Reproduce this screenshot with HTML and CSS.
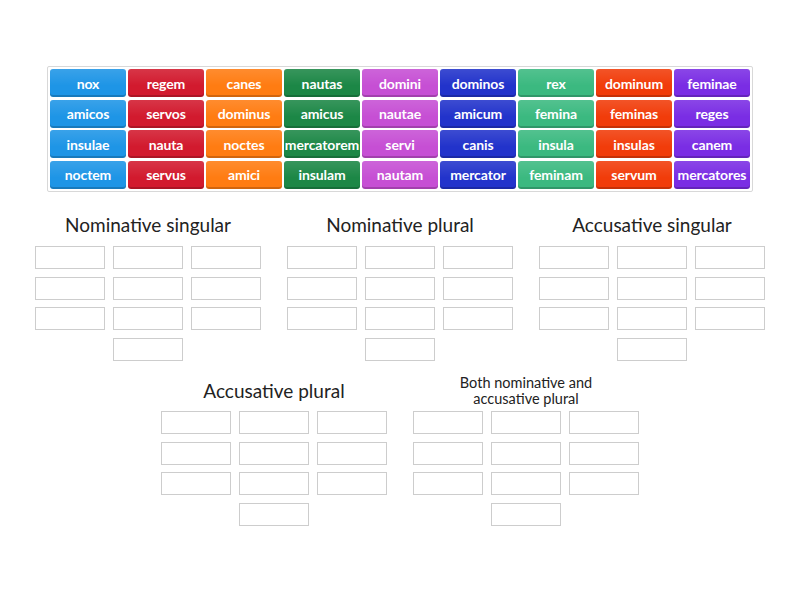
FILE: index.html
```html
<!DOCTYPE html>
<html>
<head>
<meta charset="utf-8">
<link rel="stylesheet" href="styles.css">
</head>
<body>
<div class="tiles">
  <div class="tile c1">nox</div><div class="tile c2">regem</div><div class="tile c3">canes</div><div class="tile c4">nautas</div><div class="tile c5">domini</div><div class="tile c6">dominos</div><div class="tile c7">rex</div><div class="tile c8">dominum</div><div class="tile c9">feminae</div>
  <div class="tile c1">amicos</div><div class="tile c2">servos</div><div class="tile c3">dominus</div><div class="tile c4">amicus</div><div class="tile c5">nautae</div><div class="tile c6">amicum</div><div class="tile c7">femina</div><div class="tile c8">feminas</div><div class="tile c9">reges</div>
  <div class="tile c1">insulae</div><div class="tile c2">nauta</div><div class="tile c3">noctes</div><div class="tile c4">mercatorem</div><div class="tile c5">servi</div><div class="tile c6">canis</div><div class="tile c7">insula</div><div class="tile c8">insulas</div><div class="tile c9">canem</div>
  <div class="tile c1">noctem</div><div class="tile c2">servus</div><div class="tile c3">amici</div><div class="tile c4">insulam</div><div class="tile c5">nautam</div><div class="tile c6">mercator</div><div class="tile c7">feminam</div><div class="tile c8">servum</div><div class="tile c9">mercatores</div>
</div>
<div class="groups">
  <div class="group">
    <div class="title">Nominative singular</div>
    <div class="slots"><div class="slot"></div><div class="slot"></div><div class="slot"></div><div class="slot"></div><div class="slot"></div><div class="slot"></div><div class="slot"></div><div class="slot"></div><div class="slot"></div><div class="slot last"></div></div>
  </div>
  <div class="group">
    <div class="title">Nominative plural</div>
    <div class="slots"><div class="slot"></div><div class="slot"></div><div class="slot"></div><div class="slot"></div><div class="slot"></div><div class="slot"></div><div class="slot"></div><div class="slot"></div><div class="slot"></div><div class="slot last"></div></div>
  </div>
  <div class="group">
    <div class="title">Accusative singular</div>
    <div class="slots"><div class="slot"></div><div class="slot"></div><div class="slot"></div><div class="slot"></div><div class="slot"></div><div class="slot"></div><div class="slot"></div><div class="slot"></div><div class="slot"></div><div class="slot last"></div></div>
  </div>
  <div class="group">
    <div class="title">Accusative plural</div>
    <div class="slots"><div class="slot"></div><div class="slot"></div><div class="slot"></div><div class="slot"></div><div class="slot"></div><div class="slot"></div><div class="slot"></div><div class="slot"></div><div class="slot"></div><div class="slot last"></div></div>
  </div>
  <div class="group">
    <div class="title small">Both nominative and<br>accusative plural</div>
    <div class="slots"><div class="slot"></div><div class="slot"></div><div class="slot"></div><div class="slot"></div><div class="slot"></div><div class="slot"></div><div class="slot"></div><div class="slot"></div><div class="slot"></div><div class="slot last"></div></div>
  </div>
</div>
</body>
</html>
```
FILE: styles.css
```css
html, body {
  margin: 0;
  padding: 0;
  background: #fff;
}
body {
  padding-top: 66px;
  font-family: Lato, "Open Sans", sans-serif;
}
.tiles {
  width: fit-content;
  margin: 0 auto;
  border: 1px solid #d8d8d8;
  border-radius: 2px;
  padding: 2px;
  display: grid;
  grid-template-columns: repeat(9, 76px);
  grid-auto-rows: 28px;
  column-gap: 2px;
  row-gap: 2.67px;
}
.tile {
  border-radius: 3px;
  color: #fff;
  font-size: 14px;
  font-weight: 700;
  display: flex;
  align-items: center;
  justify-content: center;
  white-space: nowrap;
  letter-spacing: -0.1px;
  box-shadow: inset 0 -2px 0 rgba(0,0,0,0.18);
  background-image: linear-gradient(rgba(255,255,255,0.12), rgba(255,255,255,0) 60%);
}
.c1 { background-color: #1e95e6; }
.c2 { background-color: #d21a2e; }
.c3 { background-color: #ff7c12; }
.c4 { background-color: #1c8746; }
.c5 { background-color: #c64fd4; }
.c6 { background-color: #2233cb; }
.c7 { background-color: #3bb980; }
.c8 { background-color: #f13c0a; }
.c9 { background-color: #7a2de4; }

.groups {
  margin-top: 16px;
  display: flex;
  flex-wrap: wrap;
  justify-content: center;
  column-gap: 26px;
  row-gap: 12px;
}
.group {
  width: 226px;
}
.title {
  height: 34px;
  margin-bottom: 4px;
  display: flex;
  align-items: center;
  justify-content: center;
  text-align: center;
  font-size: 19px;
  color: #222;
  white-space: nowrap;
}
.title.small {
  font-size: 14.5px;
  line-height: 16px;
  padding-top: 2px;
  box-sizing: border-box;
}
.slots {
  display: grid;
  grid-template-columns: repeat(3, 70px);
  grid-auto-rows: 23px;
  column-gap: 8px;
  row-gap: 7.7px;
}
.slot {
  border: 1px solid #cdcdcd;
  box-sizing: border-box;
}
.slot.last {
  grid-column: 2;
}
```
